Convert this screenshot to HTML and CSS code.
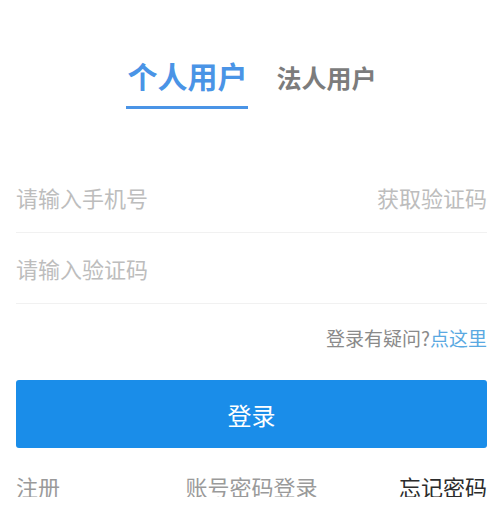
FILE: index.html
```html
<!DOCTYPE html>
<html lang="zh-CN">
<head>
  <meta charset="UTF-8" />
  <meta name="viewport" content="width=device-width, initial-scale=1.0"/>
  <title>登录</title>
  <link rel="stylesheet" href="styles.css">
</head>
<body>
  <div class="page">
    <div class="tabs">
      <span class="tab active">个人用户</span>
      <span class="tab">法人用户</span>
    </div>

    <form class="login-form">
      <div class="field">
        <input type="text" placeholder="请输入手机号">
        <span class="send-code">获取验证码</span>
      </div>
      <div class="field">
        <input type="text" placeholder="请输入验证码">
      </div>

      <p class="help">登录有疑问?<a>点这里</a></p>

      <button type="submit">登录</button>
    </form>

    <div class="links">
      <a class="muted left">注册</a>
      <a class="muted">账号密码登录</a>
      <a class="dark right">忘记密码</a>
    </div>
  </div>
</body>
</html>
```

FILE: styles.css
```css
:root {
  --primary: #1a8de9;
  --tab-blue: #4a94e6;
  --link: #5aa9e2;
  --muted: #bdbdbd;
  --gray: #8a8a8a;
  --dark: #2c2c2c;
  --line: #f1f1f1;
}

* {
  box-sizing: border-box;
}

body {
  margin: 0;
  background: #fff;
  font-family: "Noto Sans CJK SC", "Noto Sans", sans-serif;
}

.page {
  padding: 0 13px 0 16px;
}

.tabs {
  display: flex;
  justify-content: center;
  align-items: baseline;
  gap: 28px;
  padding-top: 60px;
}

.tab {
  font-size: 25px;
  font-weight: 700;
  color: #7c7c7c;
  line-height: 1;
}

.tab.active {
  font-size: 30px;
  color: var(--tab-blue);
  padding: 0 1px 16px;
  border-bottom: 3px solid var(--tab-blue);
}

.login-form {
  margin-top: 53px;
}

.field {
  display: flex;
  align-items: center;
  height: 71px;
  border-bottom: 1px solid var(--line);
}

.field input {
  flex: 1;
  border: none;
  outline: none;
  padding: 0;
  font-family: inherit;
  font-size: 22px;
  color: var(--dark);
  background: transparent;
}

.field input::placeholder {
  color: var(--muted);
}

.send-code {
  font-size: 22px;
  color: var(--muted);
}

.help {
  margin: 24px 0 0;
  text-align: right;
  font-size: 19px;
  line-height: 1;
  color: var(--gray);
}

.help a {
  color: var(--link);
}

button {
  display: block;
  width: 100%;
  height: 68px;
  margin-top: 33px;
  border: none;
  border-radius: 3px;
  background: var(--primary);
  color: #fff;
  font-family: inherit;
  font-size: 24px;
}

.links {
  display: grid;
  grid-template-columns: 1fr auto 1fr;
  margin-top: 27px;
  font-size: 22px;
  line-height: 1;
}

.links .left {
  justify-self: start;
}

.links .right {
  justify-self: end;
}

.links .muted {
  color: #9a9a9a;
}

.links .dark {
  color: var(--dark);
}
```
